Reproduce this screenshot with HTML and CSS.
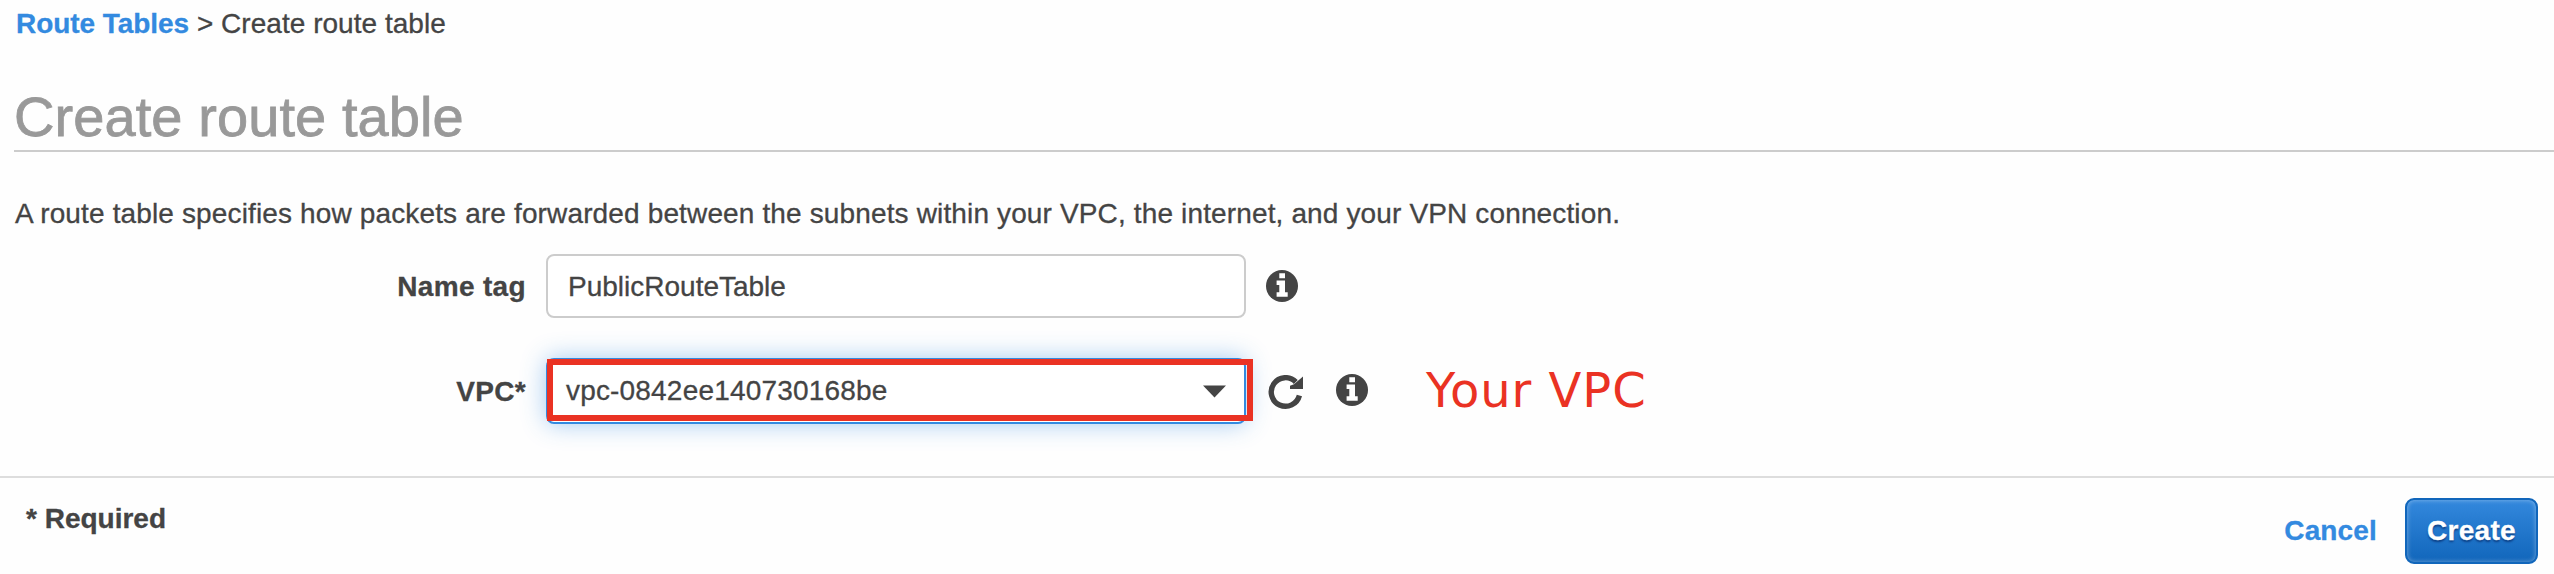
FILE: index.html
```html
<!DOCTYPE html>
<html lang="en">
<head>
<meta charset="utf-8">
<title>Create route table</title>
<link rel="stylesheet" href="styles.css">
</head>
<body>
<svg class="defs" width="0" height="0" aria-hidden="true">
  <symbol id="info" viewBox="0 0 32 32">
    <circle cx="16" cy="16" r="16" fill="#444"/>
    <path d="M13.3 3.3h5.7v4.9h-5.7zM10.6 10.6h8.4v11.6h2.7v4.6H10.6v-4.6h2.7v-7.2h-2.7z" fill="#fff"/>
  </symbol>
</svg>
<nav class="breadcrumb"><a class="crumb-link">Route Tables</a> <span class="crumb-current">&gt; Create route table</span></nav>
<main class="content">
  <h1 class="title">Create route table</h1>
  <p class="description">A route table specifies how packets are forwarded between the subnets within your VPC, the internet, and your VPN connection.</p>
  <form class="form">
    <div class="row">
      <label class="label">Name tag</label>
      <div class="field">PublicRouteTable</div>
      <svg class="info"><use href="#info"/></svg>
    </div>
    <div class="row row-vpc">
      <label class="label">VPC*</label>
      <div class="field select">
        <span class="value">vpc-0842ee140730168be</span>
        <svg class="caret" viewBox="0 0 23 13"><path d="M0 .5h23L11.5 12.5z" fill="#444"/></svg>
        <div class="highlight"></div>
      </div>
      <svg class="refresh" viewBox="0 0 36 36"><path d="M31.4 20.5A14.3 14.3 0 1 1 27.8 7" fill="none" stroke="#444" stroke-width="5.4"/><path d="M35 1.5v12.4H22v-3.1l4-1.6z" fill="#444"/></svg>
      <svg class="info info-vpc"><use href="#info"/></svg>
      <span class="note">Your VPC</span>
    </div>
  </form>
</main>
<footer class="footer">
  <span class="required">* Required</span>
  <div class="actions"><a class="cancel">Cancel</a><button class="create">Create</button></div>
</footer>
</body>
</html>
```
FILE: styles.css
```css
* { box-sizing: border-box; }
body {
  margin: 0;
  height: 574px;
  overflow: hidden;
  background: #fefefe;
  color: #444;
  font: 28px/32px "Liberation Sans", Arial, sans-serif;
  -webkit-text-stroke: 0.3px;
}
.defs { position: absolute; }
.breadcrumb { padding: 8px 16px 0; }
.crumb-link { color: #338ae0; font-weight: bold; letter-spacing: -0.05px; }
.crumb-current { letter-spacing: 0.03px; }
.content { padding-left: 14px; }
.title {
  margin: 45px 0 0;
  padding-bottom: 1px;
  border-bottom: 2px solid #ccc;
  color: #999;
  font-size: 56px;
  line-height: 64px;
  font-weight: normal;
  letter-spacing: 0.08px;
  -webkit-text-stroke: 0.8px;
}
.description { margin: 46px 0 0 1px; letter-spacing: 0.14px; white-space: nowrap; }
.form { padding-top: 24px; }
.row { display: flex; align-items: center; height: 64px; }
.row-vpc { margin-top: 40px; height: 66px; }
.label {
  width: 512px;
  margin-right: 20px;
  padding-top: 1px;
  text-align: right;
  font-weight: bold;
  letter-spacing: 0.35px;
}
.field {
  width: 700px;
  height: 64px;
  padding: 15px 20px 0;
  border: 2px solid #ccc;
  border-radius: 8px;
  background: #fff;
}
.select {
  position: relative;
  display: flex;
  align-items: flex-start;
  justify-content: space-between;
  height: 66px;
  padding: 15px 18px 0;
  border-color: #338ae0;
  box-shadow: 0 0 24px rgba(51, 138, 224, .45);
}
.value { letter-spacing: 0.18px; }
.highlight {
  position: absolute;
  inset: -1px -9px 1px -1px;
  border: 6px solid #ea3223;
}
.caret { width: 23px; height: 13px; margin-top: 10px; }
.info { width: 32px; height: 32px; margin-left: 20px; }
.info-vpc { margin-top: -2px; }
.refresh { width: 36px; height: 36px; margin: 4px 12px 0 22px; }
.note {
  margin: -2px 0 0 58px;
  color: #ea3223;
  font: 48px/56px "DejaVu Sans", Verdana, sans-serif;
  letter-spacing: 0.95px;
  white-space: nowrap;
  -webkit-text-stroke: 0;
}
.footer {
  display: flex;
  justify-content: space-between;
  margin-top: 52px;
  padding: 20px 16px 0 26px;
  border-top: 2px solid #ddd;
  font-weight: bold;
}
.required { padding-top: 5px; }
.actions { display: flex; align-items: center; height: 66px; }
.cancel { margin-right: 28px; letter-spacing: 0.15px; color: #338ae0; }
.create {
  width: 133px;
  height: 66px;
  padding: 0;
  border: 2px solid #1166bb;
  border-radius: 9px;
  background: linear-gradient(#3388dd, #1166bb);
  box-shadow: inset 0 0 5px rgba(255, 255, 255, .4);
  color: #fff;
  font: inherit;
  letter-spacing: 0.3px;
  text-shadow: 0 2px 2px rgba(0, 30, 90, .6);
}
```
